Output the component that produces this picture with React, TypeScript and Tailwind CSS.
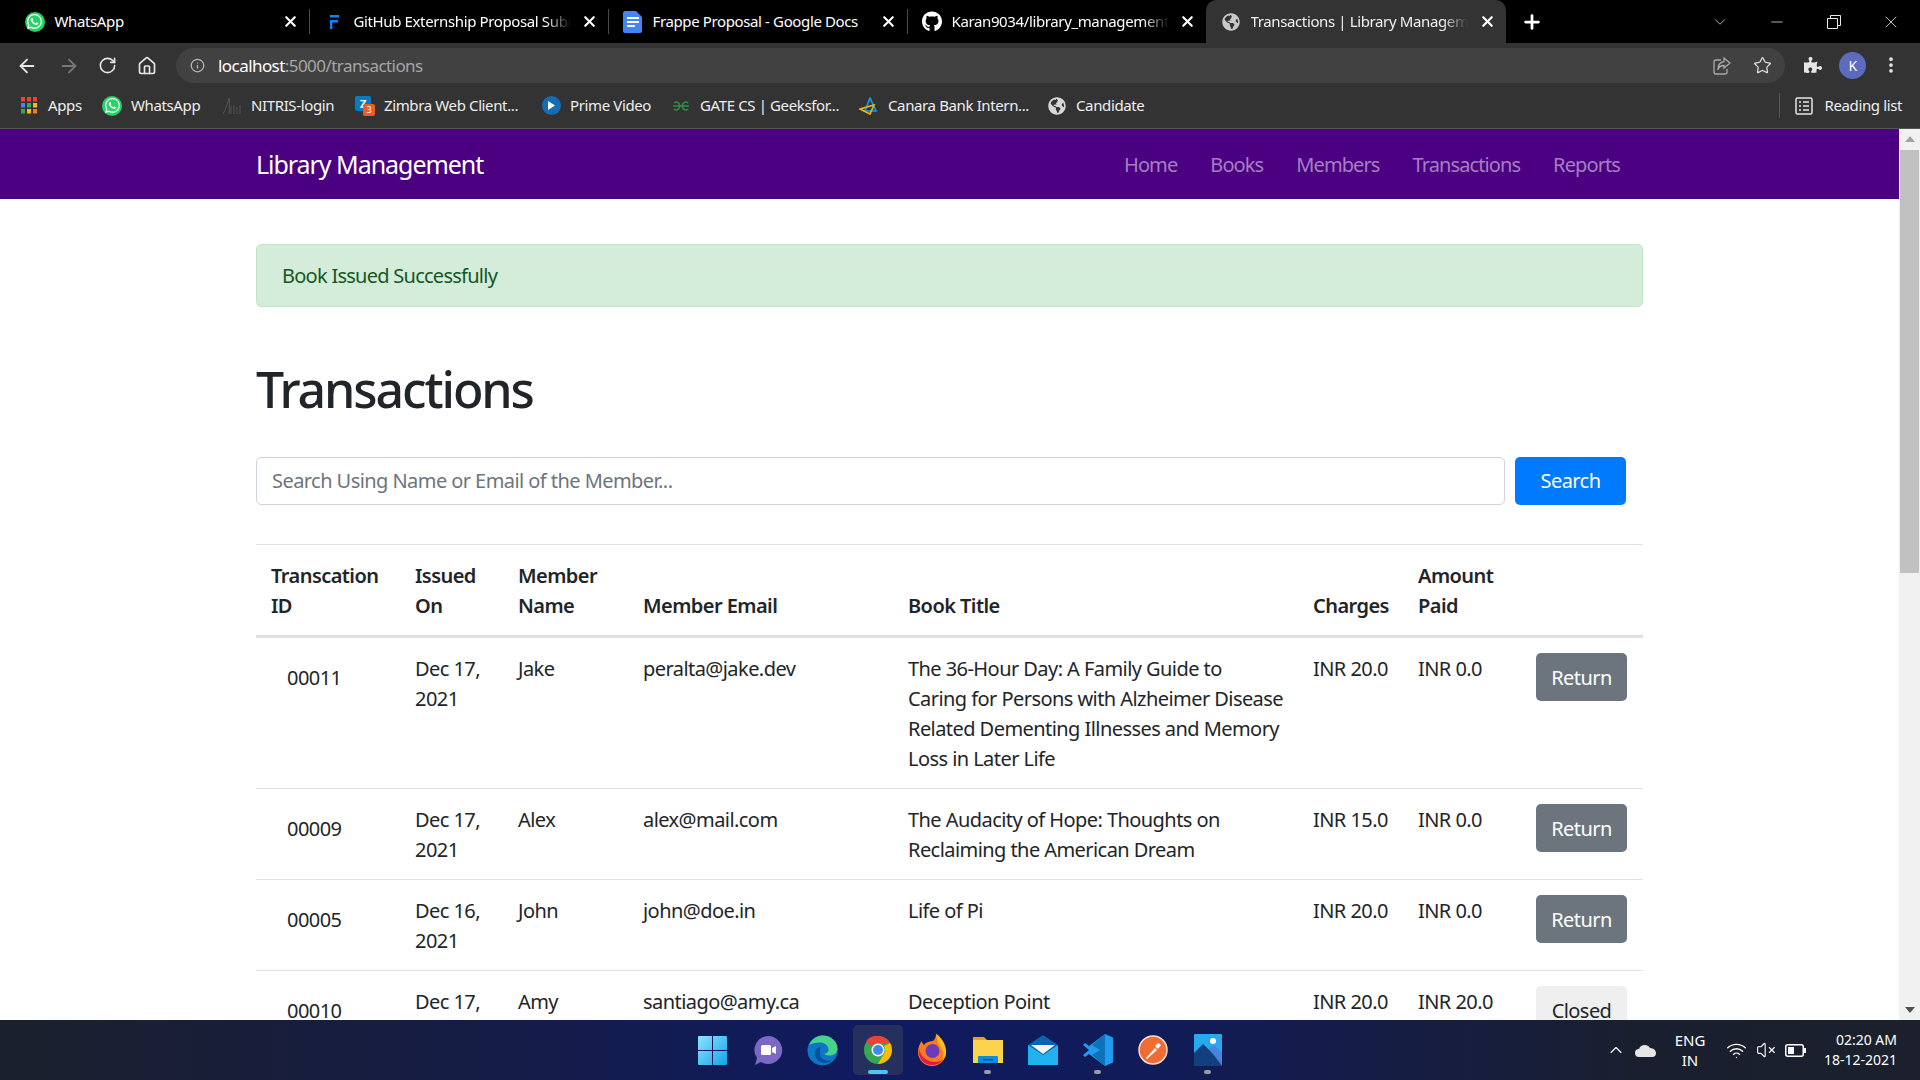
import React from "react";
import { ArrowLeft, ArrowRight, RotateCw, Home, Info, Star, MoreVertical, Plus, X, ChevronDown, Minus, ChevronUp, Wifi, VolumeX } from "lucide-react";
import { FaWhatsapp, FaGithub, FaGlobeAmericas, FaPuzzlePiece } from "react-icons/fa";

const WA = () => (
  <span className="flex h-[20px] w-[20px] items-center justify-center rounded-full bg-[#25d366] text-white"><FaWhatsapp size={17} /></span>
);
const Globe = ({ c = "#c9c9c9" }: { c?: string }) => <FaGlobeAmericas size={18} color={c} />;
const FrappeF = () => (
  <svg width="20" height="20" viewBox="0 0 20 20"><path d="M6 3h9v2.4H6zM6 8h8v2.4H8.4V17H6z" fill="#0a84ff" /></svg>
);
const Docs = () => (
  <svg width="20" height="22" viewBox="0 0 20 22"><path d="M2 0h11l6 6v14a2 2 0 0 1-2 2H2a2 2 0 0 1-2-2V2a2 2 0 0 1 2-2z" fill="#4285f4" /><path d="M4 6h12v2H4zM4 10h12v2H4zM4 14h8v2H4z" fill="#fff" /></svg>
);

function Tab({ icon, title, active, fade }: { icon: React.ReactNode; title: string; active?: boolean; fade?: boolean }) {
  return (
    <div className={active ? "flex h-[43px] w-[300px] items-center rounded-t-[10px] bg-[#333333] pl-[15px] pr-[10px] text-[#f0f0f0]" : "flex h-[43px] w-[298px] items-center pl-[14px] pr-[10px] text-white"}>
      <span className="flex w-[20px] justify-center">{icon}</span>
      <span className={fade ? "ml-[10px] w-[217px] whitespace-nowrap pb-[1px] [mask-image:linear-gradient(to_right,black_88%,transparent)]" : "ml-[10px] w-[217px] whitespace-nowrap pb-[1px]"}>{title}</span>
      <X size={17} strokeWidth={3} className="ml-auto text-white" />
    </div>
  );
}
const Sep = () => <div className="mt-[9px] h-[25px] w-px shrink-0 bg-[#4a4a4a]" />;

function Bm({ icon, text, w }: { icon: React.ReactNode; text: string; w: number }) {
  return (
    <div className="flex shrink-0 items-center gap-[9px] text-[#eeeeee]" style={{ width: w }}>
      <span className="flex w-[20px] justify-center">{icon}</span>
      <span className="whitespace-nowrap">{text}</span>
    </div>
  );
}

const Apps = () => (
  <svg width="16" height="17" viewBox="0 0 16 17">
    {[0, 1, 2].map((r) => [0, 1, 2].map((c) => (
      <rect key={`${r}${c}`} x={c * 6} y={r * 6} width="4" height="4.5" fill={[["#ea4335", "#ea4335", "#ea4335"], ["#4285f4", "#34a853", "#fbbc04"], ["#34a853", "#fbbc04", "#ea7a35"]][r][c]} />
    )))}
  </svg>
);
const Nitris = () => (
  <svg width="20" height="18" viewBox="0 0 20 18" fill="none" stroke="#555" strokeWidth="1"><path d="M1 17C4 12 6 5 7 1c1 5 0 11 0 16M9 17V9M12 17V8M15 17V10M18 17V8" /></svg>
);
const Zimbra = () => (
  <span className="relative block h-[20px] w-[20px]">
    <span className="absolute left-0 top-0 flex h-[15px] w-[16px] items-center justify-center rounded-[2px] bg-[#0a7ac4] text-[11px] font-bold leading-none text-white">Z</span>
    <span className="absolute bottom-0 right-0 flex h-[12px] w-[12px] items-center justify-center rounded-[2px] bg-[#f15a22] text-[9px] leading-none text-white">3</span>
  </span>
);
const Prime = () => (
  <span className="flex h-[19px] w-[19px] items-center justify-center rounded-full bg-[#146eb4]">
    <svg width="8" height="9" viewBox="0 0 8 9"><path d="M1 0l7 4.5L1 9z" fill="#fff" /></svg>
  </span>
);
const Gfg = () => (
  <svg width="18" height="10" viewBox="0 0 18 10" fill="none" stroke="#2f8d46" strokeWidth="1.5"><path d="M1 5h16M2 2c2-2 5-1 6 3-1 4-4 5-6 3M16 2c-2-2-5-1-6 3 1 4 4 5 6 3" /></svg>
);
const Canara = () => (
  <svg width="20" height="18" viewBox="0 0 20 18" fill="none" strokeWidth="1.6"><path d="M11 1l6 13H6z" stroke="#0aa5e0" /><path d="M1 12l14-4-4 9z" stroke="#f5b21a" /></svg>
);

const Win = () => (
  <svg width="29" height="29" viewBox="0 0 29 29"><defs><linearGradient id="w" x1="0" y1="0" x2="1" y2="1"><stop offset="0" stopColor="#8fe3fb" /><stop offset="1" stopColor="#12a4ee" /></linearGradient></defs><path d="M0 1a1 1 0 0 1 1-1h13v14H0zM15 0h13a1 1 0 0 1 1 1v13H15zM0 15h14v14H1a1 1 0 0 1-1-1zM15 15h14v13a1 1 0 0 1-1 1H15z" fill="url(#w)" /></svg>
);
const Teams = () => (
  <svg width="30" height="31" viewBox="0 0 30 31"><path d="M15 1a14 14 0 1 1-7 26l-6 3 2-7A14 14 0 0 1 15 1z" fill="#7b68c4" /><rect x="8" y="10" width="10" height="10" rx="1.5" fill="#fff" /><path d="M19 13l4-2v8l-4-2z" fill="#fff" /></svg>
);
const Edge = () => (
  <svg width="31" height="31" viewBox="0 0 31 31"><circle cx="15.5" cy="15.5" r="15" fill="#0c77c7" /><path d="M2 10C5 3 11 .5 16 .5c8 0 14.500 6 14.500 13 0 5-4 7-8 7-3 0-5-1-5-2 3 0 4-2 4-4 0-4-4-7-9-7-4 0-8 1-10.500 2.500z" fill="#46d38a" /><path d="M14 12c-4 0-6 3-6 7 0 5 5 9 10 9 3 0 5-1 7-3-3 1-7 1-9-1-3-2-4-6-2-12z" fill="#0b4f9e" /></svg>
);
const Chrome = () => (
  <svg width="28" height="28" viewBox="0 0 28 28"><circle cx="14" cy="14" r="14" fill="#34a853" /><path d="M14 0a14 14 0 0 1 12.100 7H14a7 7 0 0 0-6.100 3.500L2 5A14 14 0 0 1 14 0z" fill="#ea4335" /><path d="M26.100 7A14 14 0 0 1 14 28l6-10.500A7 7 0 0 0 20 10z" fill="#fbbc04" /><circle cx="14" cy="14" r="6.500" fill="#fff" /><circle cx="14" cy="14" r="5" fill="#4285f4" /></svg>
);
const Firefox = () => (
  <svg width="29" height="32" viewBox="0 0 29 32"><path d="M18 0c5 3 10 10 10 18a14 14 0 0 1-28 0C0 13 2 9 4 7c0 2 1 3 2 4 2-3 6-4 9-4 2-2 3-4 3-7z" fill="#ff7a1a" /><path d="M18 0c5 3 10 10 10 18 0 3-1 6-3 8 1-5 0-11-4-15-1-3-2-6-3-11z" fill="#ffbd1f" /><circle cx="14.500" cy="17" r="7" fill="#6e3bb8" /><path d="M1 15c2 8 8 13 16 13 4 0 7-1 9-4-3 5-7 7-12 7C6 31 0 25 1 15z" fill="#e3174b" /></svg>
);
const Folder = () => (
  <svg width="30" height="30" viewBox="0 0 30 30"><path d="M0 2h11l3 3H0z" fill="#e0a32a" /><path d="M0 5h30v23H0z" fill="#fcd34d" /><path d="M5 22a1 1 0 0 1 1-1h18a1 1 0 0 1 1 1v6H5z" fill="#0f8ddc" /><rect x="10" y="24" width="10" height="1.500" fill="#0b5fa5" /></svg>
);
const Mail = () => (
  <svg width="30" height="30" viewBox="0 0 30 30"><path d="M15 0l15 10v20H0V10z" fill="#0a63b0" /><path d="M3 10h24l-12 9z" fill="#f2f2f2" /><path d="M0 10l15 10 15-10v20H0z" fill="#1fb2ee" /></svg>
);
const VSCode = () => (
  <svg width="30" height="32" viewBox="0 0 30 32"><path d="M22 0l8 3.500v25L22 32 6 20l-4 3-2-2 6-5-6-5 2-2 4 3z" fill="#1f9cf0" /><path d="M22 0v32L9 21l8-5-8-5z" fill="#0e72b8" /></svg>
);
const Postman = () => (
  <svg width="30" height="30" viewBox="0 0 30 30"><circle cx="15" cy="15" r="14" fill="#ef6c33" stroke="#f5dfd5" strokeWidth="1.500" /><path d="M8 23l9-10 2 2-10 9zM17 11l3-3 3 2-3 4z" fill="#fff" /></svg>
);
const Photos = () => (
  <svg width="28" height="32" viewBox="0 0 28 32"><rect width="28" height="32" fill="#26a9ee" rx="1" /><circle cx="19" cy="7" r="3" fill="#fff" /><path d="M0 32V19l9-9 19 18v4z" fill="#123f7e" /><path d="M15 15l5-4 8 8v13z" fill="#4c7fd8" opacity=".9" /></svg>
);

const rows = [
  { id: "00011", on: "Dec 17, 2021", n: "Jake", e: "peralta@jake.dev", t: ["The 36-Hour Day: A Family Guide to", "Caring for Persons with Alzheimer Disease", "Related Dementing Illnesses and Memory", "Loss in Later Life"], c: "INR 20.0", p: "INR 0.0", b: "Return" },
  { id: "00009", on: "Dec 17, 2021", n: "Alex", e: "alex@mail.com", t: ["The Audacity of Hope: Thoughts on", "Reclaiming the American Dream"], c: "INR 15.0", p: "INR 0.0", b: "Return" },
  { id: "00005", on: "Dec 16, 2021", n: "John", e: "john@doe.in", t: ["Life of Pi"], c: "INR 20.0", p: "INR 0.0", b: "Return" },
  { id: "00010", on: "Dec 17, 2021", n: "Amy", e: "santiago@amy.ca", t: ["Deception Point"], c: "INR 20.0", p: "INR 20.0", b: "Closed" },
];

export default function App() {
  const font = { fontFamily: '"Noto Sans", sans-serif' };
  const cell = "px-[15px] pb-[14px] pt-[16px]";
  return (
    <div className="flex h-[1080px] w-[1920px] flex-col overflow-hidden bg-white tracking-[-0.035em]" style={font}>
      <div className="flex h-[43px] shrink-0 items-start bg-black pl-[10.5px] text-[15px] tracking-[-0.025em]">
        <Tab icon={<WA />} title="WhatsApp" />
        <Sep />
        <Tab icon={<FrappeF />} title="GitHub Externship Proposal Subm" fade />
        <Sep />
        <Tab icon={<Docs />} title="Frappe Proposal - Google Docs" />
        <Sep />
        <Tab icon={<FaGithub size={21} color="#fff" />} title="Karan9034/library_management:" fade />
        <Tab active icon={<Globe />} title="Transactions | Library Manageme" fade />
        <Plus size={22} strokeWidth={3} className="ml-[15px] mt-[11px] text-white" />
        <div className="ml-auto flex h-[43px] items-center text-[#e8e8e8]">
          <ChevronDown size={18} strokeWidth={1} className="mr-[39px]" />
          <Minus size={18} strokeWidth={1} className="mr-[41px]" />
          <svg width="14" height="14" viewBox="0 0 14 14" fill="none" stroke="#e8e8e8" className="mr-[40px]"><path d="M.5 3.500h10v10H.5zM3.500 3.500v-3h10v10h-3" /></svg>
          <X size={20} strokeWidth={1} className="mr-[19px]" />
        </div>
      </div>

      <div className="flex h-[40px] shrink-0 items-start bg-[#333333] pt-[5px] text-[#e6e6e6]">
        <div className="flex h-[35px] w-[176px] shrink-0 items-center">
          <ArrowLeft size={22} className="ml-[16px]" />
          <ArrowRight size={22} className="ml-[20px] text-[#777777]" />
          <RotateCw size={19} className="ml-[18px]" />
          <Home size={20} className="ml-[20px]" />
        </div>
        <div className="flex h-[35px] w-[1609px] items-center rounded-full bg-[#414141] pl-[14px] pr-[13px]">
          <Info size={15} className="text-[#b8b8b8]" />
          <span className="ml-[13px] text-[17px] text-white">localhost<span className="text-[#a6a6a6]">:5000/transactions</span></span>
          <svg width="18" height="18" viewBox="0 0 18 18" fill="none" stroke="#a8a8a8" strokeWidth="1.300" className="ml-auto"><path d="M8 3H3a2 2 0 0 0-2 2v10a2 2 0 0 0 2 2h9a2 2 0 0 0 2-2v-3M11 1l6 5-6 5V8.500C8 8.500 5.500 10 5 13c0-5 2-8 6-8.500z" /></svg>
          <Star size={19} className="ml-[22px] text-[#dddddd]" strokeWidth={1.600} />
        </div>
        <FaPuzzlePiece size={18} className="ml-[19px] mt-[8px] text-[#e6e6e6]" />
        <span className="ml-[17px] mt-[4px] flex h-[27px] w-[27px] items-center justify-center rounded-full bg-[#5c6bc0] text-[14px] text-white">K</span>
        <MoreVertical size={20} strokeWidth={2.500} className="ml-[15px] mt-[7px]" />
      </div>

      <div className="flex h-[46px] shrink-0 items-center border-b border-[#555555] bg-[#333333] pl-[19px] pr-[18px] text-[15px] tracking-[-0.025em]">
        <Bm icon={<Apps />} text="Apps" w={83} />
        <Bm icon={<WA />} text="WhatsApp" w={120} />
        <Bm icon={<Nitris />} text="NITRIS-login" w={133} />
        <Bm icon={<Zimbra />} text="Zimbra Web Client..." w={186} />
        <Bm icon={<Prime />} text="Prime Video" w={130} />
        <Bm icon={<Gfg />} text="GATE CS | Geeksfor..." w={188} />
        <Bm icon={<Canara />} text="Canara Bank Intern..." w={188} />
        <Bm icon={<Globe c="#d8d8d8" />} text="Candidate" w={100} />
        <div className="ml-auto flex items-center">
          <div className="mr-[15px] h-[25px] w-px bg-[#555555]" />
          <svg width="18" height="18" viewBox="0 0 18 18" fill="none" stroke="#e6e6e6" strokeWidth="1.500"><rect x="1" y="1" width="16" height="16" rx="1.500" /><path d="M4 5h2M8 5h6M4 9h2M8 9h6M4 13h2M8 13h6" /></svg>
          <span className="ml-[11px] whitespace-nowrap text-[#eeeeee]">Reading list</span>
        </div>
      </div>

      <div className="flex min-h-0 flex-1">
        <main className="min-w-0 flex-1 overflow-hidden">
          <nav className="flex h-[70px] items-center bg-[#4b0082] pl-[256px] pr-[279px] pt-[2px] tracking-[-0.065em]">
            <span className="text-[25px] text-white">Library Management</span>
            <div className="ml-auto flex gap-[33px] text-[20px] tracking-[-0.045em] text-[#a57fc0]">
              <span>Home</span><span>Books</span><span>Members</span><span>Transactions</span><span>Reports</span>
            </div>
          </nav>
          <div className="pl-[256px] pr-[256px] text-[20px] leading-[30px] text-[#212529]">
            <div className="mt-[45px] flex h-[63px] items-center rounded-[5px] border border-[#c3e6cb] bg-[#d4edda] pl-[25px] tracking-[-0.037em] text-[#155724]">Book Issued Successfully</div>
            <h1 className="mt-[52px] text-[50px] font-medium leading-[60px] tracking-[-0.042em]">Transactions</h1>
            <div className="mt-[38px] flex h-[48px] pr-[17px]">
              <div className="flex flex-1 items-center rounded-[5px] border border-[#ced4da] pl-[15px] text-[#6c757d]">Search Using Name or Email of the Member...</div>
              <div className="ml-[10px] flex w-[111px] items-center justify-center rounded-[5px] bg-[#007bff] text-white">Search</div>
            </div>
            <table className="mt-[39px] w-[1387px] table-fixed border-collapse text-left">
              <colgroup>
                <col className="w-[144px]" /><col className="w-[103px]" /><col className="w-[125px]" /><col className="w-[265px]" /><col className="w-[405px]" /><col className="w-[105px]" /><col className="w-[118px]" /><col className="w-[122px]" />
              </colgroup>
              <thead>
                <tr className="border-y border-b-[3px] border-[#dee2e6] align-bottom">
                  {["Transcation ID", "Issued On", "Member Name", "Member Email", "Book Title", "Charges", "Amount Paid", ""].map((h) => (
                    <th key={h} className={`${cell} font-semibold`}>{h}</th>
                  ))}
                </tr>
              </thead>
              <tbody>
                {rows.map((r) => (
                  <tr key={r.id} className="border-b border-[#dee2e6] align-top">
                    <td className="px-[31px] pb-[14px] pt-[25px]">{r.id}</td>
                    <td className={cell}>{r.on}</td>
                    <td className={cell}>{r.n}</td>
                    <td className={cell}>{r.e}</td>
                    <td className={`${cell} whitespace-nowrap`}>
                      {r.t.map((l, i) => (<React.Fragment key={i}>{i > 0 && <br />}{l}</React.Fragment>))}
                    </td>
                    <td className={cell}>{r.c}</td>
                    <td className={cell}>{r.p}</td>
                    <td className="py-[15px] pl-[15px] pr-[16px]">
                      <div className={r.b === "Return" ? "flex h-[48px] items-center justify-center rounded-[5px] bg-[#6c757d] pt-[1px] text-white" : "flex h-[48px] items-center justify-center rounded-[5px] bg-[#efefef] pt-[1px] text-[#212529]"}>{r.b}</div>
                    </td>
                  </tr>
                ))}
              </tbody>
            </table>
          </div>
        </main>
        <div className="flex w-[21px] shrink-0 flex-col items-center bg-[#f1f1f1]">
          <svg width="10" height="6" viewBox="0 0 10 6" className="mt-[7px]"><path d="M5 0l5 6H0z" fill="#a3a3a3" /></svg>
          <div className="mt-[8px] h-[423px] w-[19px] bg-[#c1c1c1]" />
          <svg width="10" height="6" viewBox="0 0 10 6" className="mb-[7px] mt-auto"><path d="M0 0h10L5 6z" fill="#505050" /></svg>
        </div>
      </div>

      <div className="flex h-[60px] shrink-0 items-center bg-[linear-gradient(90deg,#1b202d_0%,#151c45_25%,#0f1b60_45%,#101b58_60%,#1a1f30_85%,#1b202c_100%)] pl-[685px] pr-[23px] text-white">
        {[<Win />, <Teams />, <Edge />, <Chrome />, <Firefox />, <Folder />, <Mail />, <VSCode />, <Postman />, <Photos />].map((ic, i) => (
          <div key={i} className={i === 3 ? "relative mx-[2.500px] flex h-[50px] w-[50px] items-center justify-center rounded-[5px] bg-[#25305f]" : "relative flex h-[50px] w-[55px] items-center justify-center"}>
            {ic}
            {i === 3 && <span className="absolute bottom-[1px] h-[4px] w-[20px] rounded-full bg-[#4cc2ff]" />}
            {(i === 5 || i === 7 || i === 9) && <span className="absolute bottom-[1px] h-[4px] w-[7px] rounded-full bg-[#9a9ca5]" />}
          </div>
        ))}
        <div className="ml-auto flex items-center tracking-normal">
          <ChevronUp size={20} strokeWidth={1.300} />
          <svg width="21" height="13" viewBox="0 0 21 13" className="ml-[9px]"><path d="M4 13a4 4 0 0 1 0-8c1-4 8-6 11-1 4 0 6 3 6 5a4 4 0 0 1-4 4z" fill="#e6e6e6" /></svg>
          <div className="ml-[16px] w-[36px] text-center text-[15px] leading-[20px]">ENG<br />IN</div>
          <Wifi size={21} className="ml-[18px]" strokeWidth={1.600} />
          <VolumeX size={20} className="ml-[9px]" strokeWidth={1.300} />
          <svg width="21" height="13" viewBox="0 0 21 13" fill="none" className="ml-[9px]"><rect x=".75" y=".75" width="17.500" height="11.500" rx="2" stroke="#fff" strokeWidth="1.500" /><rect x="3" y="3" width="6" height="7" fill="#fff" /><rect x="19" y="4" width="2" height="5" fill="#fff" /></svg>
          <div className="ml-[11px] w-[80px] text-right text-[14px] leading-[20px]">02:20 AM<br />18-12-2021</div>
        </div>
      </div>
    </div>
  );
}
